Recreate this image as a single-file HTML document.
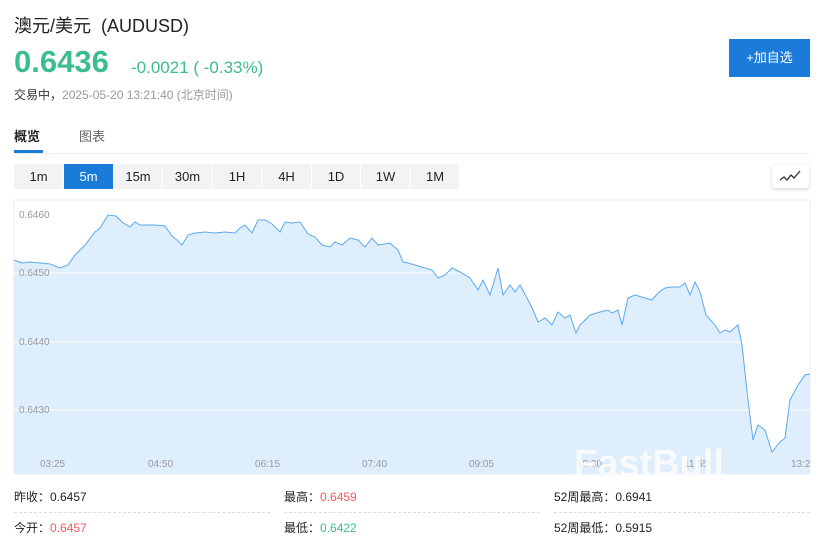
<!DOCTYPE html>
<html><head><meta charset="utf-8"><style>
body{margin:0;width:825px;height:537px;background:#fff;font-family:"Liberation Sans","Noto Sans CJK SC",sans-serif;position:relative;overflow:hidden;color:#222}
.a{position:absolute;white-space:nowrap}
.tf{position:absolute;top:164px;height:25px;line-height:25px;font-size:13px;text-align:center;background:#f2f3f5;color:#222}
</style></head><body>
<div class="a" style="left:14px;top:12px;font-size:18px;color:#222">澳元/美元&nbsp;&nbsp;(AUDUSD)</div>
<div class="a" style="left:14px;top:44px;font-size:31px;font-weight:bold;color:#3bbd8e">0.6436</div>
<div class="a" style="left:131px;top:58px;font-size:17px;color:#3bbd8e">-0.0021 ( -0.33%)</div>
<div class="a" style="left:14px;top:86px;font-size:12px;color:#999"><span style="color:#333">交易中，</span>2025-05-20 13:21:40 (北京时间)</div>
<div class="a" style="left:729px;top:39px;width:81px;height:38px;background:#1a7bd9;color:#fff;font-size:13px;line-height:38px;text-align:center">+加自选</div>
<div class="a" style="left:14px;top:126px;font-size:13px;font-weight:bold;color:#222">概览</div>
<div class="a" style="left:79px;top:126px;font-size:13px;color:#666">图表</div>
<div class="a" style="left:14px;top:150px;width:29px;height:3px;background:#1a7bd9"></div>
<div class="a" style="left:14px;top:153px;width:796px;height:1px;background:#eee"></div>
<div class="tf" style="left:14px;width:49px">1m</div>
<div class="tf" style="left:64px;width:49px;background:#1a7bd9;color:#fff">5m</div>
<div class="tf" style="left:114px;width:48px">15m</div>
<div class="tf" style="left:163px;width:49px">30m</div>
<div class="tf" style="left:213px;width:48px">1H</div>
<div class="tf" style="left:262px;width:49px">4H</div>
<div class="tf" style="left:312px;width:48px">1D</div>
<div class="tf" style="left:361px;width:49px">1W</div>
<div class="tf" style="left:411px;width:48px">1M</div>
<div class="a" style="left:772px;top:165px;width:37px;height:23px;background:#fff;box-shadow:0 1px 3px rgba(0,0,0,.2);border-radius:2px">
<svg width="37" height="23"><path d="M8 15 L12 12 L15 15 L19 10 L22 13 L28 6" stroke="#333" stroke-width="1.3" fill="none"/></svg></div>
<svg class="a" style="left:0;top:195px" width="825" height="285">
<rect x="14" y="5" width="796" height="274" fill="#fff" stroke="#eee"/>
<g transform="translate(0,-195)">
<path d="M14 260 L22 263 L30 262 L50 264 L60 268 L68 265 L75 255 L85 245 L95 232 L100 228 L108 215 L116 216 L122 222 L130 227 L135 222 L140 225 L148 225 L155 225 L165 226 L172 236 L177 240 L182 245 L188 235 L195 233 L205 232 L215 233 L225 232 L235 233 L240 228 L245 225 L252 233 L258 220 L265 220 L272 224 L280 232 L285 222 L292 223 L300 222 L308 234 L315 237 L322 245 L330 247 L335 242 L342 245 L350 238 L358 240 L365 247 L372 238 L378 245 L385 244 L390 243 L398 250 L403 262 L408 263 L415 265 L425 268 L432 270 L438 278 L445 275 L452 268 L460 272 L470 278 L478 290 L483 280 L490 295 L498 268 L503 295 L510 285 L515 292 L520 285 L528 300 L533 310 L538 322 L545 318 L552 325 L558 312 L565 318 L570 315 L576 333 L580 325 L590 315 L600 312 L608 310 L612 313 L618 310 L622 325 L628 298 L635 295 L645 298 L652 300 L658 293 L665 288 L672 287 L680 287 L685 283 L690 295 L695 282 L700 292 L706 315 L715 325 L720 333 L725 330 L730 332 L738 325 L742 345 L748 400 L753 440 L758 425 L765 430 L772 452 L780 442 L785 438 L790 400 L798 385 L805 375 L810 374 L810 474 L14 474 Z" fill="#deeefd"/>
</g>
<g stroke="#fff"><line x1="14" x2="810" y1="20" y2="20"/><line x1="14" x2="810" y1="78" y2="78"/><line x1="14" x2="810" y1="147" y2="147"/><line x1="14" x2="810" y1="215" y2="215"/></g>
<g transform="translate(0,-195)">
<path d="M14 260 L22 263 L30 262 L50 264 L60 268 L68 265 L75 255 L85 245 L95 232 L100 228 L108 215 L116 216 L122 222 L130 227 L135 222 L140 225 L148 225 L155 225 L165 226 L172 236 L177 240 L182 245 L188 235 L195 233 L205 232 L215 233 L225 232 L235 233 L240 228 L245 225 L252 233 L258 220 L265 220 L272 224 L280 232 L285 222 L292 223 L300 222 L308 234 L315 237 L322 245 L330 247 L335 242 L342 245 L350 238 L358 240 L365 247 L372 238 L378 245 L385 244 L390 243 L398 250 L403 262 L408 263 L415 265 L425 268 L432 270 L438 278 L445 275 L452 268 L460 272 L470 278 L478 290 L483 280 L490 295 L498 268 L503 295 L510 285 L515 292 L520 285 L528 300 L533 310 L538 322 L545 318 L552 325 L558 312 L565 318 L570 315 L576 333 L580 325 L590 315 L600 312 L608 310 L612 313 L618 310 L622 325 L628 298 L635 295 L645 298 L652 300 L658 293 L665 288 L672 287 L680 287 L685 283 L690 295 L695 282 L700 292 L706 315 L715 325 L720 333 L725 330 L730 332 L738 325 L742 345 L748 400 L753 440 L758 425 L765 430 L772 452 L780 442 L785 438 L790 400 L798 385 L805 375 L810 374" fill="none" stroke="#5aa9ef" stroke-width="1"/>
</g>
<g font-size="10" fill="#999" font-family="Liberation Sans"><text x="19" y="23">0.6460</text><text x="19" y="81">0.6450</text><text x="19" y="150">0.6440</text><text x="19" y="218">0.6430</text>
<text x="40" y="272">03:25</text><text x="148" y="272">04:50</text><text x="255" y="272">06:15</text><text x="362" y="272">07:40</text><text x="469" y="272">09:05</text><text x="577" y="272">10:30</text><text x="684" y="272">11:55</text><text x="791" y="272">13:2</text></g>
</svg>
<div class="a" style="left:574px;top:443px;font-size:38px;font-weight:bold;color:rgba(255,255,255,.75);text-shadow:0 0 1px rgba(230,230,230,.5)">FastBull</div>
<div class="a" style="left:14px;top:488px;font-size:12px">昨收：0.6457</div>
<div class="a" style="left:284px;top:488px;font-size:12px">最高：<span style="color:#f45a5a">0.6459</span></div>
<div class="a" style="left:554px;top:488px;font-size:12px">52周最高：0.6941</div>
<div class="a" style="left:14px;top:512px;width:256px;border-top:1px dashed #ddd"></div>
<div class="a" style="left:284px;top:512px;width:256px;border-top:1px dashed #ddd"></div>
<div class="a" style="left:554px;top:512px;width:256px;border-top:1px dashed #ddd"></div>
<div class="a" style="left:14px;top:519px;font-size:12px">今开：<span style="color:#f45a5a">0.6457</span></div>
<div class="a" style="left:284px;top:519px;font-size:12px">最低：<span style="color:#3bbd8e">0.6422</span></div>
<div class="a" style="left:554px;top:519px;font-size:12px">52周最低：0.5915</div>
</body></html>
